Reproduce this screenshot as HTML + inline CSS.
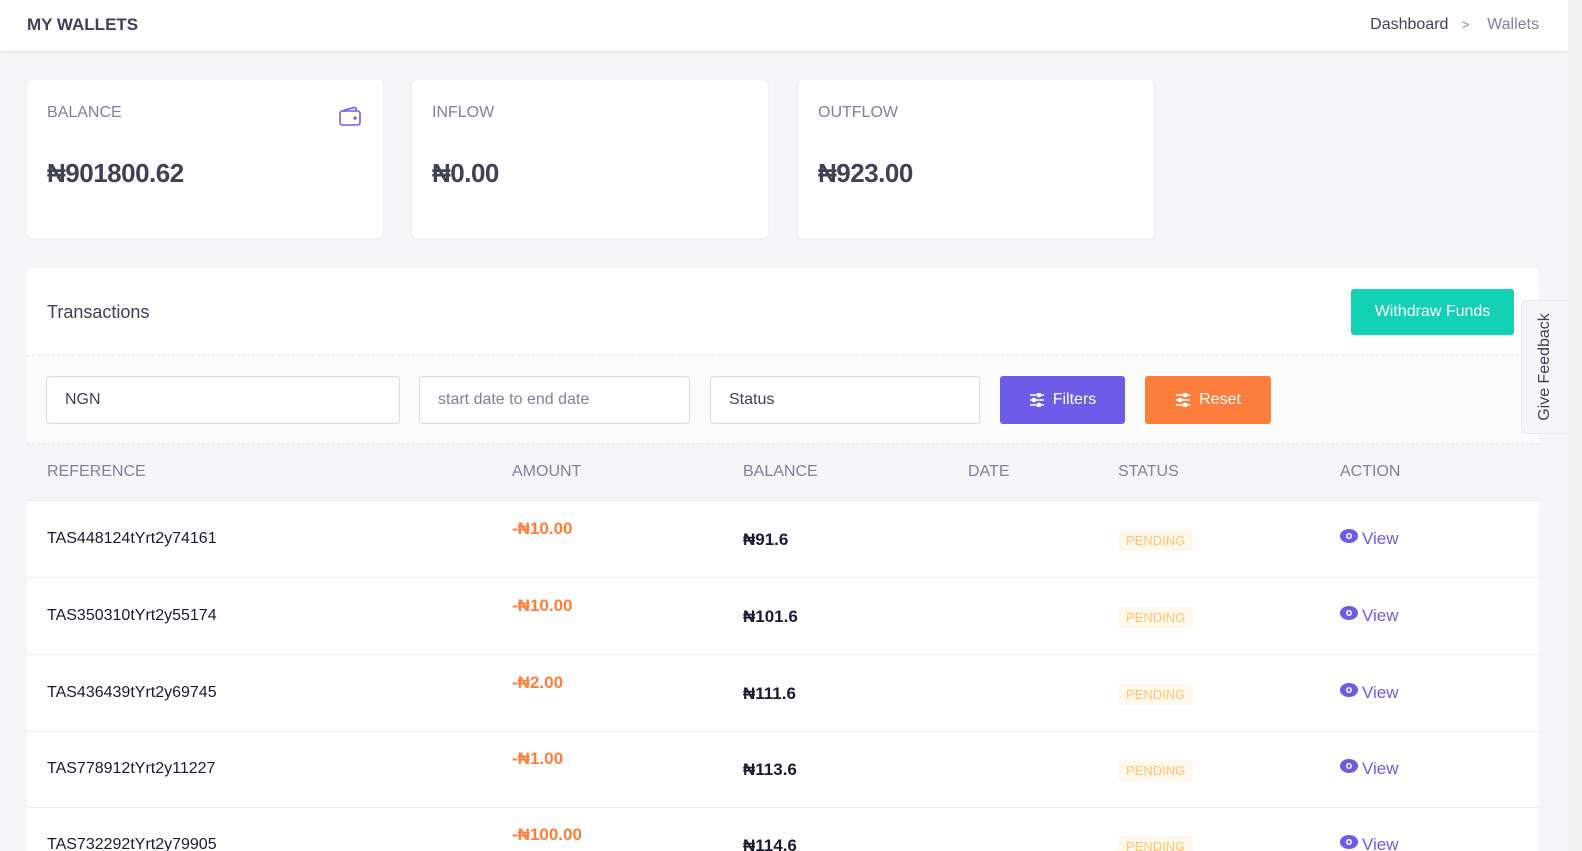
<!DOCTYPE html>
<html style="overflow:hidden;height:851px"><head><meta charset="utf-8"><style>
*{box-sizing:border-box;margin:0;padding:0}
body{width:1582px;height:851px;overflow:hidden;background:#f5f6f8;font-family:"Liberation Sans",sans-serif;color:#3f4254;position:relative}
.top{position:absolute;left:0;top:0;width:1568px;height:51px;background:#fff;box-shadow:0 1px 3px rgba(0,0,0,.1)}
.top h1{position:absolute;left:27px;top:15px;font-size:17px;font-weight:bold;color:#3f4254}
.bc{position:absolute;right:29px;top:16px;font-size:16px;color:#3f4254}
.bc span{color:#7e8299}
.card{position:absolute;top:80px;width:356px;height:158px;background:#fff;border-radius:5px;box-shadow:0 0 4px rgba(0,0,0,.05)}
.card .l{position:absolute;left:20px;top:24px;font-size:16px;color:#7e8299}
.card .v{position:absolute;left:20px;top:78px;font-size:26px;font-weight:bold;color:#3f4254;letter-spacing:-.5px}
.tc{position:absolute;left:27px;top:268px;width:1512px;height:583px;background:#fff;border-radius:5px 5px 0 0;overflow:hidden}
.tt{position:absolute;left:20px;top:34px;font-size:18px;color:#3f4254}
.wd{position:absolute;left:1324px;top:21px;width:163px;height:46px;background:#13d1b5;color:#fff;border-radius:3px;font-size:16px;text-align:center;line-height:46px}
.fa{position:absolute;left:0;top:87px;width:1512px;height:89px;background:#fcfcfd;border-top:1px dashed #e6e8ee;border-bottom:1px dashed #e6e8ee}
.in{position:absolute;top:20px;height:48px;border:1px solid #d9dbe3;border-radius:3px;background:#fff;font-size:16px;line-height:46px;padding-left:18px;color:#3f4254}
.btn{position:absolute;top:20px;height:48px;border-radius:3px;color:#fff;font-size:16px;line-height:48px;text-align:center}
.btn svg{vertical-align:-3px;margin-right:8px}
.th{position:absolute;left:0;top:176px;width:1512px;height:57px;background:#f3f6f9;border-bottom:1px solid #e8ebf0}
.th div{position:absolute;top:19px;font-size:16px;color:#7e8299}
.row{position:absolute;left:0;width:1512px;height:77px;border-bottom:1px solid #ebedf2}
.row div{position:absolute}
.ref{left:20px;top:29px;font-size:16px;color:#181c32}
.amt{left:485px;top:18px;font-size:17px;font-weight:bold;color:#fd7e3c}
.bal{left:716px;top:29px;font-size:17px;font-weight:bold;color:#181c32}
.st{left:1091px;top:29px;background:#fff8ec;color:#ffc46b;font-size:13px;padding:3px 8px;border-radius:3px}
.vw{left:1313px;top:28px;font-size:17px;color:#6c5ce7}
.vw svg{vertical-align:1px;margin-right:4px}
.fb{position:absolute;left:1521px;top:300px;width:47px;height:134px;background:#f5f6f8;border:1px solid #e4e6ef;border-right:none;border-radius:6px 0 0 6px}
.fb span{position:absolute;left:50%;top:50%;transform:translate(-50%,-50%) rotate(-90deg);white-space:nowrap;font-size:16px;color:#3f4254}
.sb{position:absolute;left:1568px;top:0;width:14px;height:851px;background:#f1f1f1}
</style></head><body>
<div class="top"><h1>MY WALLETS</h1><div class="bc">Dashboard &nbsp;&nbsp;<span style="font-size:13px">&gt;</span>&nbsp;&nbsp;&nbsp; <span>Wallets</span></div></div>
<div class="card" style="left:27px"><div class="l">BALANCE</div>
<svg style="position:absolute;left:312px;top:26px" width="22" height="20" viewBox="0 0 22 20" fill="none" stroke="#6c5ce7" stroke-width="1.6"><rect x="1" y="5" width="20" height="14" rx="2.5"/><path d="M3 5 L15 1.5 Q17 1 17 3 V5"/><circle cx="16" cy="12" r="0.8" fill="#6c5ce7"/></svg>
<div class="v">₦901800.62</div></div>
<div class="card" style="left:412px"><div class="l">INFLOW</div><div class="v">₦0.00</div></div>
<div class="card" style="left:798px"><div class="l">OUTFLOW</div><div class="v">₦923.00</div></div>
<div class="tc">
<div class="tt">Transactions</div>
<div class="wd">Withdraw Funds</div>
<div class="fa">
<div class="in" style="left:19px;width:354px">NGN</div>
<div class="in" style="left:392px;width:271px;color:#7e8299">start date to end date</div>
<div class="in" style="left:683px;width:270px">Status</div>
<div class="btn" style="left:973px;width:125px;background:#6c5ce7"><svg width="16" height="14" viewBox="0 0 16 14" stroke="#fff" stroke-width="1.6"><path d="M1 2H15M1 7H15M1 12H15"/><circle cx="10" cy="2" r="1.6" fill="#fff"/><circle cx="5" cy="7" r="1.6" fill="#fff"/><circle cx="10" cy="12" r="1.6" fill="#fff"/></svg>Filters</div>
<div class="btn" style="left:1118px;width:126px;background:#fd7e3c"><svg width="16" height="14" viewBox="0 0 16 14" stroke="#fff" stroke-width="1.6"><path d="M1 2H15M1 7H15M1 12H15"/><circle cx="10" cy="2" r="1.6" fill="#fff"/><circle cx="5" cy="7" r="1.6" fill="#fff"/><circle cx="10" cy="12" r="1.6" fill="#fff"/></svg>Reset</div>
</div>
<div class="th"><div style="left:20px">REFERENCE</div><div style="left:485px">AMOUNT</div><div style="left:716px">BALANCE</div><div style="left:941px">DATE</div><div style="left:1091px">STATUS</div><div style="left:1313px">ACTION</div></div>
<div class="row" style="top:233px"><div class="ref">TAS448124tYrt2y74161</div><div class="amt">-₦10.00</div><div class="bal">₦91.6</div><div class="st">PENDING</div><div class="vw"><svg width="18" height="14" viewBox="0 0 18 14"><ellipse cx="9" cy="7" rx="9" ry="7" fill="#6c5ce7"/><circle cx="9" cy="7" r="3" fill="#fff"/><circle cx="9" cy="7" r="1.5" fill="#6c5ce7"/></svg>View</div></div>
<div class="row" style="top:310px"><div class="ref">TAS350310tYrt2y55174</div><div class="amt">-₦10.00</div><div class="bal">₦101.6</div><div class="st">PENDING</div><div class="vw"><svg width="18" height="14" viewBox="0 0 18 14"><ellipse cx="9" cy="7" rx="9" ry="7" fill="#6c5ce7"/><circle cx="9" cy="7" r="3" fill="#fff"/><circle cx="9" cy="7" r="1.5" fill="#6c5ce7"/></svg>View</div></div>
<div class="row" style="top:387px"><div class="ref">TAS436439tYrt2y69745</div><div class="amt">-₦2.00</div><div class="bal">₦111.6</div><div class="st">PENDING</div><div class="vw"><svg width="18" height="14" viewBox="0 0 18 14"><ellipse cx="9" cy="7" rx="9" ry="7" fill="#6c5ce7"/><circle cx="9" cy="7" r="3" fill="#fff"/><circle cx="9" cy="7" r="1.5" fill="#6c5ce7"/></svg>View</div></div>
<div class="row" style="top:463px"><div class="ref">TAS778912tYrt2y11227</div><div class="amt">-₦1.00</div><div class="bal">₦113.6</div><div class="st">PENDING</div><div class="vw"><svg width="18" height="14" viewBox="0 0 18 14"><ellipse cx="9" cy="7" rx="9" ry="7" fill="#6c5ce7"/><circle cx="9" cy="7" r="3" fill="#fff"/><circle cx="9" cy="7" r="1.5" fill="#6c5ce7"/></svg>View</div></div>
<div class="row" style="top:539px"><div class="ref">TAS732292tYrt2y79905</div><div class="amt">-₦100.00</div><div class="bal">₦114.6</div><div class="st">PENDING</div><div class="vw"><svg width="18" height="14" viewBox="0 0 18 14"><ellipse cx="9" cy="7" rx="9" ry="7" fill="#6c5ce7"/><circle cx="9" cy="7" r="3" fill="#fff"/><circle cx="9" cy="7" r="1.5" fill="#6c5ce7"/></svg>View</div></div>
</div>
<div class="fb"><span>Give Feedback</span></div>
<div class="sb"></div>
</body></html>
